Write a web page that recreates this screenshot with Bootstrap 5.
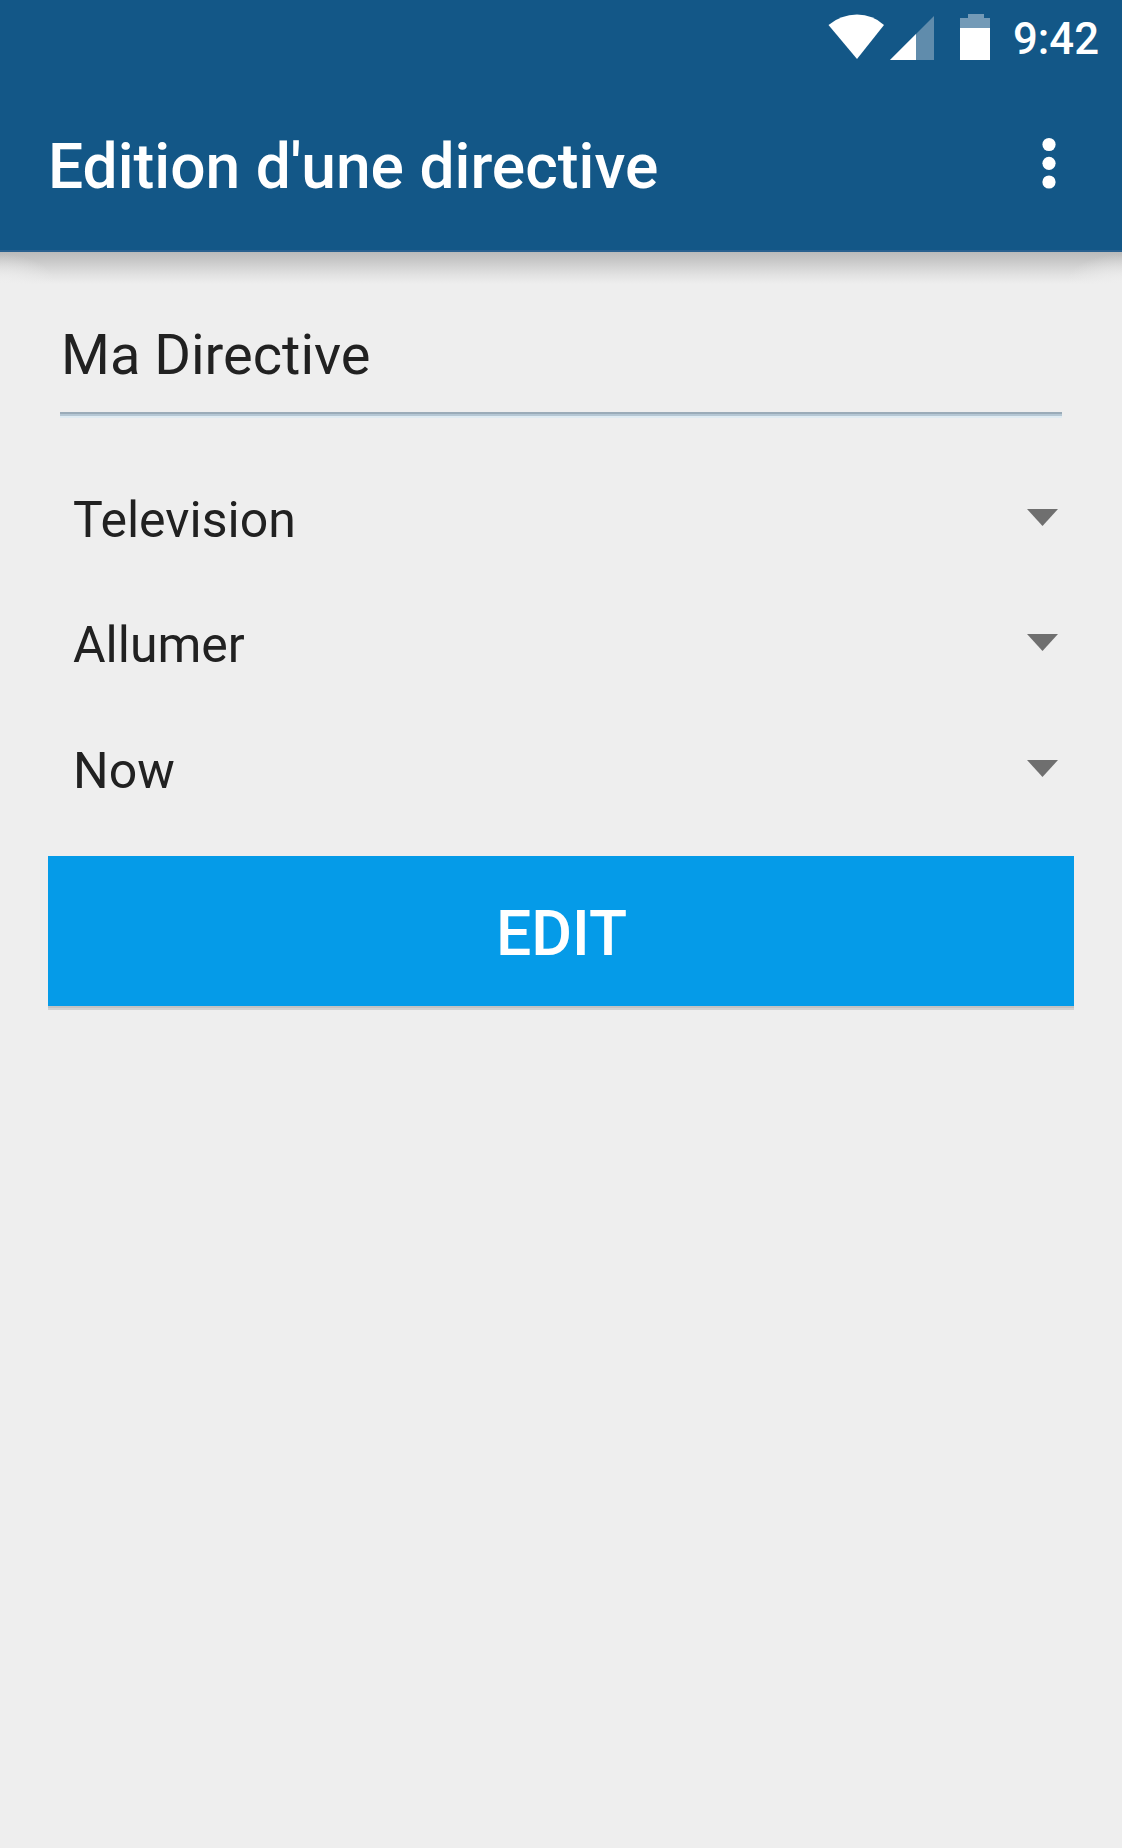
<!DOCTYPE html>
<html lang="fr">
<head>
<meta charset="utf-8">
<meta name="viewport" content="width=device-width, initial-scale=1">
<title>Edition d'une directive</title>
<link href="https://cdn.jsdelivr.net/npm/bootstrap@5.3.0/dist/css/bootstrap.min.css" rel="stylesheet">
<style>
  body { background: #eee; color: #212121; font-family: Roboto, "Noto Sans", sans-serif; min-height: 1848px; overflow-x: hidden; }
  .app-header { height: 252px; background: #135787; border-bottom: 2px solid #28608f; }
  .header-shade { height: 32px; background: linear-gradient(#bbb 0, #c4c4c4 20%, #d3d3d3 45%, #e2e2e2 72%, #eee 100%); position: relative; }
  .header-shade::before, .header-shade::after { content: ""; position: absolute; top: 0; bottom: 0; width: 56px; }
  .header-shade::before { left: 0; background: radial-gradient(ellipse 56px 30px at 0 100%, #eee 0, #eee0 100%); }
  .header-shade::after { right: 0; background: radial-gradient(ellipse 56px 30px at 100% 100%, #eee 0, #eee0 100%); }
  .status-bar { height: 76px; padding-right: 23px; }
  .status-bar svg { display: block; }
  .clock { font-size: 43.7px; line-height: 79px; font-weight: 500; margin-left: 21px; }
  .title-bar { height: 174px; padding: 0 66px 0 48px; }
  .screen-title { font-size: 62.3px; line-height: 168px; padding-top: 7px; font-weight: 500; }
  .form-area { padding: 0 48px; }
  .text-field { margin: 0 12px; height: 134px; font-size: 56px; line-height: 142px; padding-left: 1px; background: linear-gradient(#9aabb8 0 2px, #b5c7d4 2px 4px, #dfebf2 4px 6px) no-repeat bottom / 100% 6px; }
  .picker-list { padding-top: 40px; }
  .picker { height: 125px; padding: 0 16px 0 25px; font-size: 50px; line-height: 125px; }
  .picker svg { margin-bottom: 7px; }
  .picker:last-child { padding-top: 1px; }
  .edit-btn { height: 150px; margin-top: 23px; padding: 6px 0 0 1px; background: #059be8; color: #fff; font-size: 62.5px; font-weight: 500; line-height: 1; box-shadow: 0 2px 0 #c3c3c3, 0 4px 0 #d2d2d2; }
  .edit-btn:hover { background: #059be8; color: #fff; }
</style>
</head>
<body>
<header class="app-header text-white">
  <div class="status-bar d-flex align-items-start justify-content-end">
    <svg width="164" height="76" viewBox="828 0 164 76" aria-hidden="true">
      <path d="M857 59 828.5 25Q841 14.500 857 14.500T884 25Z" fill="#fff"/>
      <path d="M890 60 934 16V60Z" fill="#608cac"/>
      <path d="M890 60 916 34V60Z" fill="#fff"/>
      <path d="M960 28V18H968V14H984V18H990V28Z" fill="#739ab7"/>
      <path d="M960 28H990V60H960Z" fill="#fff"/>
    </svg>
    <span class="clock">9:42</span>
  </div>
  <div class="title-bar d-flex align-items-center justify-content-between">
    <h1 class="screen-title mb-0">Edition d'une directive</h1>
    <svg width="14" height="52" viewBox="0 0 14 52" aria-label="Menu">
      <g fill="#fff"><circle cx="7" cy="7.500" r="6.600"/><circle cx="7" cy="26.300" r="6.600"/><circle cx="7" cy="45" r="6.600"/></g>
    </svg>
  </div>
</header>
<div class="header-shade"></div>
<main class="form-area">
  <div class="text-field">Ma Directive</div>
  <div class="picker-list">
    <div class="picker d-flex align-items-center justify-content-between">
      <span>Television</span>
      <svg width="31" height="18" viewBox="0 0 31 18" aria-hidden="true"><path d="M0 1H31L15.500 18Z" fill="#6f6f6f"/></svg>
    </div>
    <div class="picker d-flex align-items-center justify-content-between">
      <span>Allumer</span>
      <svg width="31" height="18" viewBox="0 0 31 18" aria-hidden="true"><path d="M0 1H31L15.500 18Z" fill="#6f6f6f"/></svg>
    </div>
    <div class="picker d-flex align-items-center justify-content-between">
      <span>Now</span>
      <svg width="31" height="18" viewBox="0 0 31 18" aria-hidden="true"><path d="M0 1H31L15.500 18Z" fill="#6f6f6f"/></svg>
    </div>
  </div>
  <button type="button" class="btn edit-btn w-100 border-0 rounded-0">EDIT</button>
</main>
<script src="https://cdn.jsdelivr.net/npm/bootstrap@5.3.0/dist/js/bootstrap.bundle.min.js"></script>
</body>
</html>
